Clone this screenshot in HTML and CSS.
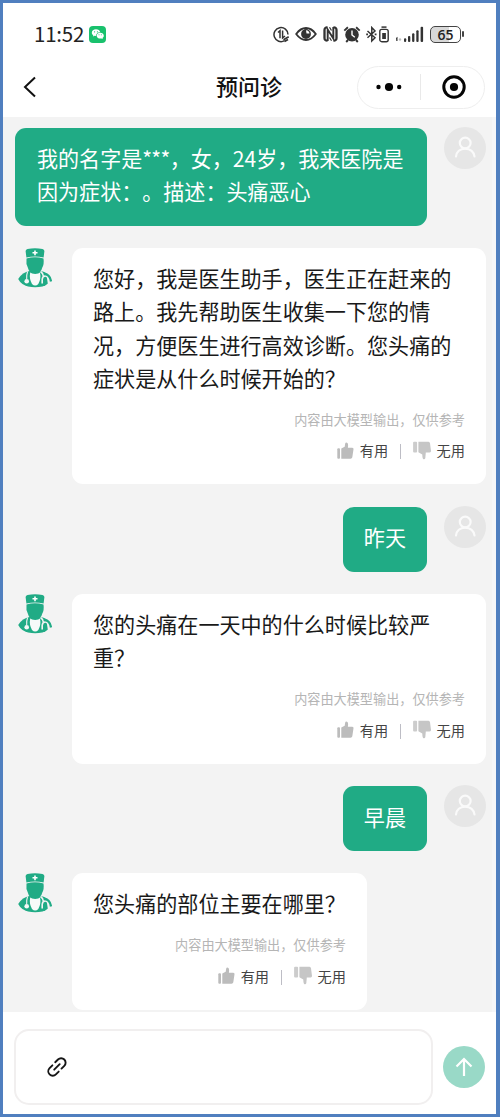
FILE: index.html
```html
<!DOCTYPE html>
<html lang="zh-CN">
<head>
<meta charset="utf-8">
<title>预问诊</title>
<link rel="stylesheet" href="styles.css">
</head>
<body>
<svg class="defs" width="0" height="0" aria-hidden="true">
  <symbol id="doctor" viewBox="0 0 34 40">
    <path fill="#20ab85" d="M7.600 3Q7.800 1.500 9.500 1.100Q17-.8 24.500 1.100Q26.200 1.500 26.400 3L25.600 9.600Q17 7.200 8.400 9.600Z"/>
    <path fill="#20ab85" d="M8.500 10.500Q17 8.200 25.500 10.500Q26.300 16 24.300 19.500Q23 24.600 20 24.600H14Q11.200 24.600 9.800 19.500Q7.800 16 8.500 10.500Z"/>
    <path fill="#fff" d="M16.200 2.500h1.600v1.600h1.700v1.500H17.800v1.700h-1.600V5.600h-1.700V4.100h1.700z"/>
    <path fill="#20ab85" d="M11.500 23Q4.500 24 .2 31Q3 36.500 10 38.600Q17 40 24.500 38.600Q28 37.500 30 35.500L28 25Q26 23.300 22.500 23Z"/>
    <path fill="#f7faf9" d="M12.200 24.600Q13.500 26 17.200 26T22 24.600Q23.300 31 20.300 36Q17.200 39 14 36Q11 31 12.200 24.600Z"/>
    <path fill="none" stroke="#f3f3f3" stroke-width="1.100" d="M9.600 23.500Q8.300 27 8.700 31"/>
    <circle cx="8.700" cy="33.200" r="2.300" fill="#f5f8f7"/>
    <path fill="none" stroke="#f3f3f3" stroke-width="1.600" d="M24.200 35.500V31.500Q24.400 28 27.200 28Q30 28 30.600 32V36M22.500 23.500Q25 25 25.500 28.500"/>
    <path fill="none" stroke="#20ab85" stroke-width="2.300" d="M26 25.700Q32 26.500 33 33.500"/>
  </symbol>
  <symbol id="person" viewBox="0 0 42 42">
    <circle cx="21" cy="21" r="21" fill="#e6e6e6"/>
    <g fill="none" stroke="#fafafa" stroke-width="2.200" stroke-linecap="round"><circle cx="21.200" cy="16" r="5.400"/><path d="M12 29.500C12.500 25 16 21.600 21.200 21.600S30 25 30.500 29.500"/></g>
  </symbol>
  <symbol id="up" viewBox="0 0 17 17">
    <rect x=".3" y="6.200" width="2.700" height="10.500" rx="1" fill="#bcbcbc"/>
    <path fill="#bcbcbc" d="M4.300 6.500L7.700 4.700L8.200 1.600Q8.600 .2 10 .7Q11.600 1.400 10.900 5.700H15.300Q16.800 5.900 16.500 7.300L15.300 15.300Q15 16.700 13.600 16.700H4.300Z"/>
  </symbol>
  <symbol id="down" viewBox="0 0 18 19">
    <rect x=".1" y=".8" width="4" height="10.700" rx="1" fill="#ccc"/>
    <path fill="#c6c6c6" d="M5.400 .8H15.500Q16.800 .8 17 2.300L18 10Q18 11.400 16.700 11.400H12.800L12.300 17.200Q11.800 18.700 10.500 18.200Q9.300 17.700 9.300 13.500L5.400 11.300Z"/>
  </symbol>
</svg>
<div class="phone">
  <header class="status">
    <span class="time">11:52</span>
    <svg class="wechat" viewBox="0 0 17 17"><rect width="17" height="17" rx="4" fill="#19c16d"/><path fill="#fff" d="M7 3.300C4.600 3.300 2.800 4.800 2.800 6.700c0 1.100.6 2 1.500 2.600l-.4 1.300 1.700-.8 1.500.2C7 7.500 8.900 6 11.300 6.200 10.900 4.500 9.200 3.300 7 3.300z"/><path fill="#fff" d="M11.200 6.800c-2 0-3.500 1.300-3.500 2.900s1.500 2.900 3.500 2.900l1.200-.2 1.400.7-.3-1.200c.8-.5 1.300-1.300 1.300-2.200 0-1.600-1.600-2.900-3.600-2.900z"/><g fill="#19c16d"><circle cx="5.600" cy="5.800" r=".6"/><circle cx="8.400" cy="5.800" r=".6"/><circle cx="10" cy="8.800" r=".5"/><circle cx="12.300" cy="8.800" r=".5"/></g></svg>
    <div class="indicators">
      <svg width="17" height="17" viewBox="0 0 17 17" fill="none" stroke="#333" stroke-width="1.500"><path d="M11.500 14.700A7 7 0 1 1 15 8.500"/><path d="M5 6.500L7 4.700V12.200M9.600 4.500V12L12 10"/><path d="M10.500 13.800L15.700 10.800M11.500 15.500L15 13.500" stroke-width="1.700"/></svg>
      <svg class="eye" width="22" height="16" viewBox="0 0 22 16"><path d="M1.200 8Q5.500 2 11 2T20.800 8Q16.500 14 11 14T1.200 8Z" fill="#fff" stroke="#333" stroke-width="1.800"/><circle cx="11" cy="8" r="4.900" fill="#333"/><path d="M11 4.200A3.800 3.800 0 0 1 14.500 7.600L11.500 7.500Z" fill="#fff"/></svg>
      <svg class="nfc" width="15" height="16" viewBox="0 0 15 16" fill="none" stroke="#333"><path stroke-width="2.300" d="M4.500 1.400Q1.500 1.300 1.500 4V12Q1.500 14.700 4.500 14.600M10.500 1.400Q13.500 1.300 13.500 4V12Q13.500 14.700 10.500 14.600"/><path stroke-width="1.900" d="M4.700 15V3.500L10.300 12.500V1"/><path stroke-width="1.200" d="M6.500 1.200L8.500 4.500M6.500 11.500L8.500 14.800"/></svg>
      <svg class="alarm" width="18" height="17" viewBox="0 0 18 17"><circle cx="9" cy="8.700" r="6.800" fill="#333"/><path d="M1.300 4.600L4.900 1.300M16.700 4.600L13.100 1.300M3.200 16L5 14M14.800 16L13 14" stroke="#333" stroke-width="1.900"/><path d="M9 4.500V9L11.800 11.300" fill="none" stroke="#fff" stroke-width="1.400"/></svg>
      <svg class="bt" width="11" height="17" viewBox="0 0 11 17" fill="none" stroke="#333" stroke-width="1.500"><path d="M1.500 5L9 11.800L5.800 15V1.600L9 5L1.500 11.800"/><path d="M.2 8.400H2M8.700 8.400H10.500" stroke-width="1.700"/></svg>
      <svg class="cell" width="10" height="17" viewBox="0 0 10 17"><path d="M2.500 1.100H7.500" stroke="#333" stroke-width="1.500"/><rect x=".8" y="3.400" width="8.400" height="12.300" rx="2" fill="none" stroke="#333" stroke-width="1.400"/><rect x="3.200" y="7" width="3.700" height="6" fill="#333"/></svg>
      <svg class="signal" width="30" height="17" viewBox="0 0 30 17" fill="#333"><path d="M1 12L2.500 10.700V15H1.300z"/><circle cx="5" cy="13.500" r="1.200" fill="#bbb"/><rect x="9" y="12.200" width="2.200" height="3.800" rx="1"/><rect x="13" y="10" width="2.300" height="6" rx="1"/><rect x="17.100" y="7.300" width="2.300" height="8.700" rx="1"/><rect x="21.300" y="4.300" width="2.300" height="11.700" rx="1"/><rect x="25.600" y=".8" width="2.500" height="15.200" rx="1"/></svg>
      <span class="battery">65</span><i class="nub"></i>
    </div>
  </header>
  <nav class="titlebar">
    <svg class="back" viewBox="0 0 14 22"><path d="M12 1.500L2 11L12 20.500" fill="none" stroke="#111" stroke-width="2"/></svg>
    <h1>预问诊</h1>
    <div class="capsule">
      <svg width="26" height="10" viewBox="0 0 26 10" fill="#050505"><circle cx="2.500" cy="5" r="2.200"/><circle cx="13" cy="5" r="4.100"/><circle cx="23.200" cy="5" r="2.200"/></svg>
      <i class="split"></i>
      <svg width="24" height="24" viewBox="0 0 24 24"><circle cx="12" cy="12" r="10.200" fill="none" stroke="#050505" stroke-width="3"/><circle cx="12" cy="12" r="4.100" fill="#050505"/></svg>
    </div>
  </nav>
  <main class="chat">
    <div class="row mine"><div class="bubble intro">我的名字是<span class="stars">***</span>，女，24岁，我来医院是<br>因为症状：。描述：头痛恶心</div><svg class="avatar"><use href="#person"/></svg></div>
    <div class="row"><svg class="doctor"><use href="#doctor"/></svg>
      <div class="bubble"><p>您好，我是医生助手，医生正在赶来的路上。我先帮助医生收集一下您的情况，方便医生进行高效诊断。您头痛的症状是从什么时候开始的？</p>
        <small>内容由大模型输出，仅供参考</small>
        <div class="vote"><svg class="up"><use href="#up"/></svg><span>有用</span><i></i><svg class="down"><use href="#down"/></svg><span>无用</span></div></div></div>
    <div class="row mine"><div class="bubble">昨天</div><svg class="avatar"><use href="#person"/></svg></div>
    <div class="row"><svg class="doctor"><use href="#doctor"/></svg>
      <div class="bubble"><p>您的头痛在一天中的什么时候比较严重？</p>
        <small>内容由大模型输出，仅供参考</small>
        <div class="vote"><svg class="up"><use href="#up"/></svg><span>有用</span><i></i><svg class="down"><use href="#down"/></svg><span>无用</span></div></div></div>
    <div class="row mine"><div class="bubble">早晨</div><svg class="avatar"><use href="#person"/></svg></div>
    <div class="row"><svg class="doctor"><use href="#doctor"/></svg>
      <div class="bubble"><p>您头痛的部位主要在哪里？</p>
        <small>内容由大模型输出，仅供参考</small>
        <div class="vote"><svg class="up"><use href="#up"/></svg><span>有用</span><i></i><svg class="down"><use href="#down"/></svg><span>无用</span></div></div></div>
  </main>
  <footer class="composer">
    <div class="field"><svg width="20" height="20" viewBox="0 0 20 20" fill="none" stroke="#151515" stroke-width="1.900" stroke-linecap="round"><path d="M8.200 5.200L11 2.500A4.300 4.300 0 0 1 17.300 8.800L14.500 11.600M11.700 14.600L8.900 17.400A4.300 4.300 0 0 1 2.600 11.100L5.400 8.300M7.200 12.700L12.700 7.200"/></svg></div>
    <div class="send"><svg width="18" height="20" viewBox="0 0 18 20" fill="none" stroke="#fff" stroke-width="2.200"><path d="M9 19V2.500M1.500 9.500L9 2L16.500 9.500"/></svg></div>
  </footer>
</div>
</body>
</html>
```
FILE: styles.css
```css
* { box-sizing: border-box; }
body { margin: 0; font-family: "Noto Sans CJK SC", sans-serif; color: #191919; text-spacing-trim: space-all; }
svg { display: block; flex: none; }
.defs { position: absolute; }
.phone {
  width: 500px; height: 1117px;
  border: 3px solid #507fbf; border-right-width: 4px;
  background: #fff;
  display: flex; flex-direction: column; overflow: hidden;
}
.status { height: 52px; flex: none; display: flex; align-items: center; padding: 10px 32px 0 31px; }
.time { font-size: 20.500px; line-height: 24px; width: 50px; margin: -2px 5px 0 0; letter-spacing: -.2px; color: #222; white-space: nowrap; }
.wechat { width: 17px; height: 17px; }
.indicators { margin-left: auto; display: flex; align-items: center; }
.eye { margin-left: 5px; }
.nfc { margin-left: 6px; }
.alarm { margin-left: 5px; }
.bt { margin-left: 5px; }
.cell { margin-left: 2px; }
.signal { margin-left: 6px; }
.battery {
  width: 31px; height: 17px; margin-left: 5px;
  border: 1.500px solid #444; border-radius: 5px;
  background: linear-gradient(90deg, #d8d8d8 62%, #fff 62%);
  font: 600 14px/15px "Open Sans", sans-serif; text-align: center; color: #222;
}
.nub { width: 2px; height: 6px; margin-left: 1px; background: #444; border-radius: 1px; }
.titlebar { height: 62px; flex: none; display: flex; align-items: center; padding: 2px 11px 0 20px; }
.back { width: 14px; height: 22px; }
h1 { margin: -4px 0 0 179px; font-size: 22px; line-height: 32px; font-weight: 500; color: #111; white-space: nowrap; }
.capsule {
  margin-left: auto; width: 128px; height: 43px;
  border: 1.500px solid #eee; border-radius: 22px;
  display: flex; align-items: center; padding: 0 17px 0 18px;
}
.split { width: 1px; height: 26px; background: #e9e9e9; margin: 0 21px 0 18px; }
.chat {
  height: 895px; flex: none; background: #f3f3f3; border-right: 4px solid #f5f6f8;
  padding: 11px 6px 0 12px;
  display: flex; flex-direction: column; gap: 22.500px; overflow: hidden;
}
.row { display: flex; align-items: flex-start; flex: none; }
.mine { justify-content: flex-end; }
.bubble {
  max-width: 414px; padding: 14px 21px 24px; border-radius: 11px; background: #fff;
  font-size: 21.090px; line-height: 33.200px;
}
.mine .bubble { background: #20ab85; color: #fff; padding: 14.500px 21px 17px; margin-right: 17px; white-space: nowrap; }
.mine .intro { width: 412px; padding: 14px 22px 17.700px; font-size: 21.050px; line-height: 33px; }
.stars { letter-spacing: -.7px; }
.avatar { width: 42px; height: 42px; margin-top: -1px; }
.doctor { width: 34px; height: 40px; margin: 0 20px 0 3px; }
p { margin: 0; }
small { display: block; margin-top: 14.500px; font-size: 13.150px; line-height: 20px; text-align: right; color: #b5b5b5; }
.vote { display: flex; justify-content: flex-end; align-items: center; height: 20px; margin-top: 10.800px; font-size: 14.200px; line-height: 20px; color: #444; }
.up { width: 17px; height: 17px; margin-right: 6px; }
.down { width: 18px; height: 19px; margin-right: 6px; }
.vote i { width: 1.500px; height: 15px; margin: 3px 11.500px 0; background: #bdbdc5; }
.composer { flex: 1; display: flex; align-items: center; justify-content: space-between; padding: 7px 11px 0 11px; }
.field { width: 419px; height: 76px; border: 2.500px solid #f1efef; border-radius: 15px; display: flex; align-items: center; padding-left: 31px; }
.send { width: 42px; height: 42px; border-radius: 50%; background: #99d9c7; display: flex; align-items: center; justify-content: center; }
```
